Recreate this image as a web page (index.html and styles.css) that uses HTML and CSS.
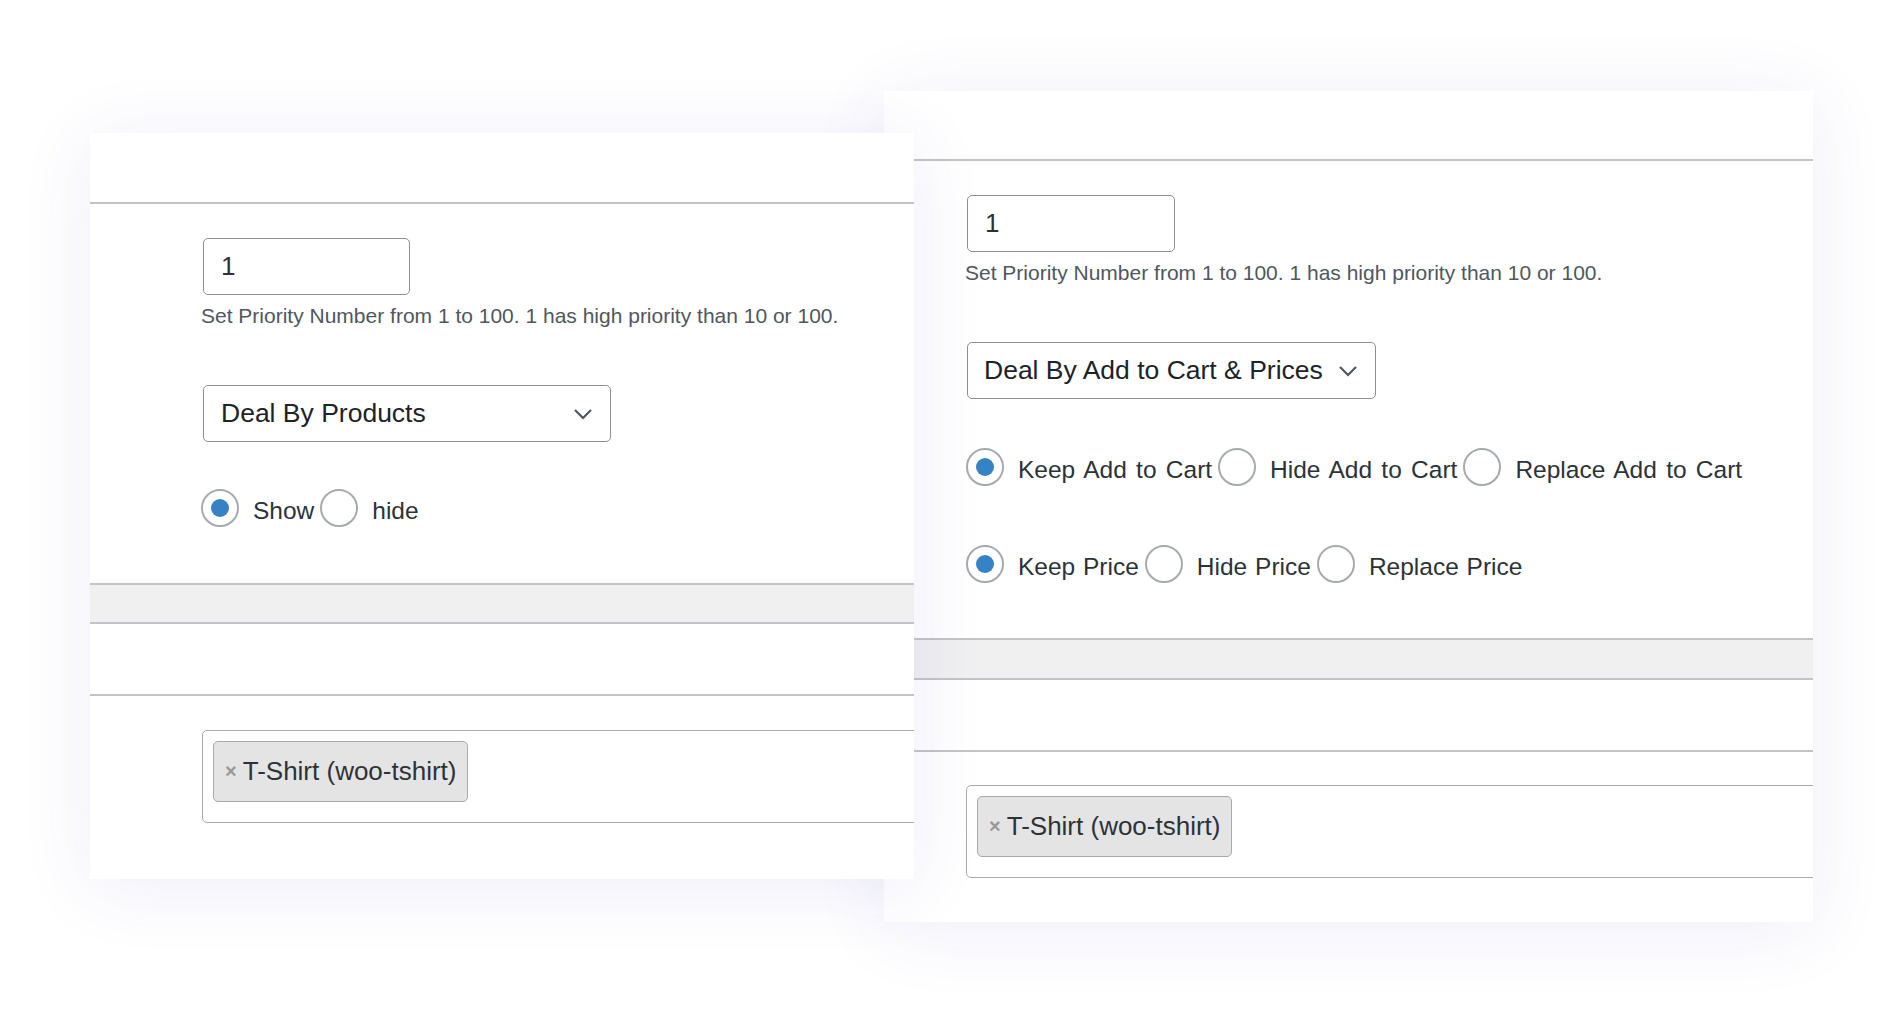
FILE: index.html
```html
<!DOCTYPE html>
<html lang="en">
<head>
<meta charset="utf-8">
<title>Deal settings</title>
<link rel="stylesheet" href="styles.css">
</head>
<body>
<div class="stage">
  <section class="card card-left">
    <div class="card-head"></div>
    <div class="main">
      <div class="num-input">1</div>
      <p class="hint">Set Priority Number from 1 to 100. 1 has high priority than 10 or 100.</p>
      <div class="select select-products">
        <span>Deal By Products</span>
        <svg class="chev" width="20" height="12" viewBox="0 0 20 12"><path d="M2 2 L10 10 L18 2" fill="none" stroke="#50575e" stroke-width="2.2"/></svg>
      </div>
      <div class="radio-row row-show">
        <label class="radio"><span class="dot checked"></span><span class="rtext">Show</span></label>
        <label class="radio"><span class="dot"></span><span class="rtext">hide</span></label>
      </div>
    </div>
    <div class="band"></div>
    <div class="blank"></div>
    <div class="tags">
      <div class="multi"><span class="tag"><span class="tag-x">×</span>T-Shirt (woo-tshirt)</span></div>
    </div>
  </section>

  <section class="card card-right">
    <div class="card-head"></div>
    <div class="main">
      <div class="num-input">1</div>
      <p class="hint">Set Priority Number from 1 to 100. 1 has high priority than 10 or 100.</p>
      <div class="select select-cart">
        <span>Deal By Add to Cart &amp; Prices</span>
        <svg class="chev" width="20" height="12" viewBox="0 0 20 12"><path d="M2 2 L10 10 L18 2" fill="none" stroke="#50575e" stroke-width="2.2"/></svg>
      </div>
      <div class="radio-row row-cart">
        <label class="radio"><span class="dot checked"></span><span class="rtext">Keep Add to Cart</span></label>
        <label class="radio"><span class="dot"></span><span class="rtext">Hide Add to Cart</span></label>
        <label class="radio"><span class="dot"></span><span class="rtext">Replace Add to Cart</span></label>
      </div>
      <div class="radio-row row-price">
        <label class="radio"><span class="dot checked"></span><span class="rtext">Keep Price</span></label>
        <label class="radio"><span class="dot"></span><span class="rtext">Hide Price</span></label>
        <label class="radio"><span class="dot"></span><span class="rtext">Replace Price</span></label>
      </div>
    </div>
    <div class="band"></div>
    <div class="blank"></div>
    <div class="tags">
      <div class="multi"><span class="tag"><span class="tag-x">×</span>T-Shirt (woo-tshirt)</span></div>
    </div>
  </section>
</div>
</body>
</html>
```
FILE: styles.css
```css
html, body {
  margin: 0;
  padding: 0;
  background: #ffffff;
}

body {
  font-family: "Liberation Sans", Arial, sans-serif;
  color: #2c3338;
}

.stage {
  display: grid;
  grid-template-columns: 1fr;
  grid-template-rows: 1fr;
  width: 1903px;
  height: 1013px;
  overflow: hidden;
}

.card {
  grid-area: 1 / 1;
  align-self: start;
  justify-self: start;
  background: #ffffff;
  overflow: hidden;
  box-sizing: border-box;
  box-shadow: 0 8px 70px rgba(70, 60, 190, 0.09);
}

.card-left {
  margin: 133px 0 0 90px;
  width: 824px;
  height: 746px;
  z-index: 2;
}

.card-right {
  margin: 91px 0 0 884px;
  width: 929px;
  height: 831px;
  z-index: 1;
}

.card-head {
  height: 69px;
  border-bottom: 2px solid #c3c4c7;
}

.card-right .card-head {
  height: 68px;
}

.main {
  padding: 34px 0 56px 113px;
}

.card-right .main {
  padding: 34px 0 55px 83px;
}

.num-input {
  width: 207px;
  height: 57px;
  box-sizing: border-box;
  border: 1px solid #8c8f94;
  border-radius: 5px;
  padding-left: 17px;
  font-size: 26px;
  color: #2c3338;
  display: flex;
  align-items: center;
}

.card-right .num-input {
  width: 208px;
}

.hint {
  margin: 9px 0 0 -2px;
  font-size: 21px;
  line-height: 24px;
  color: #50575e;
}

.select {
  margin-top: 57px;
  height: 57px;
  width: 408px;
  box-sizing: border-box;
  border: 1px solid #8c8f94;
  border-radius: 5px;
  display: flex;
  align-items: center;
  justify-content: space-between;
  padding: 0 17px 0 17px;
  font-size: 26.5px;
  color: #1d2327;
}

.select-cart {
  width: 409px;
  padding-left: 16px;
}

.chev {
  flex: none;
  display: block;
}

.radio-row {
  display: flex;
  align-items: center;
  gap: 6px;
  font-size: 24.5px;
  color: #2c3338;
  margin-left: -2px;
}

.row-show {
  margin-top: 47px;
}

.row-cart {
  margin-top: 49px;
  margin-left: -1px;
  word-spacing: 2.5px;
}

.row-price {
  margin-top: 59px;
  margin-left: -1px;
  word-spacing: 1px;
}

.radio {
  display: inline-flex;
  align-items: center;
}

.rtext {
  padding-top: 6px;
}

.dot {
  width: 38px;
  height: 38px;
  box-sizing: border-box;
  border: 2px solid #a7aaad;
  border-radius: 50%;
  margin-right: 14px;
  display: flex;
  align-items: center;
  justify-content: center;
  background: #ffffff;
}

.dot.checked::before {
  content: "";
  width: 18px;
  height: 18px;
  border-radius: 50%;
  background: #3582c4;
}

.band {
  height: 37px;
  background: #f0f0f1;
  border-top: 2px solid #c3c4c7;
  border-bottom: 2px solid #c3c4c7;
}

.card-right .band {
  height: 38px;
}

.blank {
  height: 70px;
  border-bottom: 2px solid #c3c4c7;
}

.tags {
  padding: 34px 0 0 112px;
}

.card-right .tags {
  padding: 33px 0 0 82px;
}

.multi {
  width: 1200px;
  height: 93px;
  box-sizing: border-box;
  border: 1px solid #aaaaaa;
  border-radius: 5px;
  padding: 10px;
}

.tag {
  display: inline-flex;
  align-items: center;
  height: 61px;
  box-sizing: border-box;
  border: 1px solid #aaaaaa;
  border-radius: 5px;
  background: #e4e4e4;
  padding: 0 10px 0 11px;
  font-size: 26px;
  color: #2c3338;
}

.tag-x {
  color: #999999;
  font-weight: bold;
  font-size: 20px;
  margin-right: 6px;
}
```
